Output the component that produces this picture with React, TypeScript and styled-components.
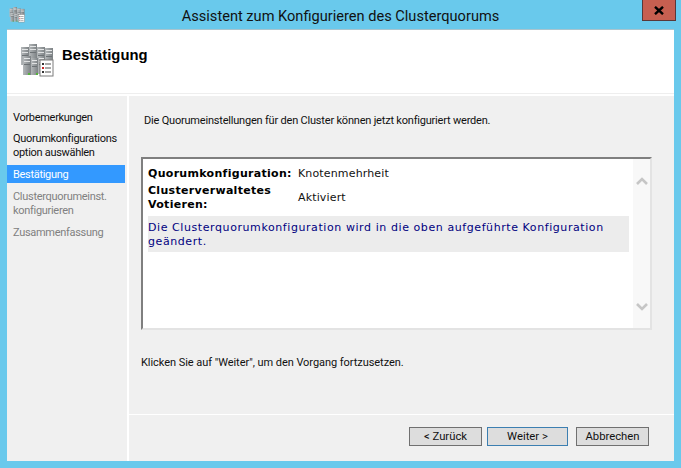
import React from "react";
import styled, { createGlobalStyle } from "styled-components";

const Global = createGlobalStyle`
  html, body { margin: 0; padding: 0; width: 681px; height: 468px; overflow: hidden; }
  * { box-sizing: border-box; }
`;

const uiFont = `Roboto, "Noto Sans", sans-serif`;
const monoFont = `"DejaVu Sans", sans-serif`;

const Window = styled.div`
  position: relative;
  width: 681px;
  height: 468px;
  background: #69c9ec;
  padding: 0 7px 7px;
  display: flex;
  flex-direction: column;
`;
const TitleBar = styled.div`
  height: 30px;
  flex: none;
  display: flex;
  align-items: center;
  padding: 0 0 0 2px;
  font: 14.6px/30px ${uiFont};
  color: #111;
`;
const TitleText = styled.div`
  flex: 1;
  text-align: center;
  padding: 1px 18px 0 0;
`;
const CloseButton = styled.div`
  position: absolute;
  left: 642px;
  top: 0;
  width: 34px;
  height: 21px;
  background: #c75f50;
  border: 1px solid #5a3838;
  border-top: 0;
  display: flex;
  align-items: center;
  justify-content: center;
`;
const Client = styled.div`
  flex: 1;
  min-height: 0;
  display: flex;
  flex-direction: column;
  background: #f0f0f0;
  box-shadow: 0 -1px 0 #a9c4ce;
`;
const Header = styled.div`
  height: 66px;
  flex: none;
  background: #fff;
  display: flex;
  align-items: flex-start;
  padding: 14px 0 0 13px;
  gap: 8px;
  position: relative;
  &::after {
    content: "";
    position: absolute;
    left: 0;
    right: 0;
    top: 63px;
    height: 1px;
    background: #eeeeee;
  }
`;
const HeaderTitle = styled.h1`
  margin: 2px 0 0;
  font: 700 14.8px/18px "Liberation Sans", Arial, sans-serif;
  color: #000;
`;
const Main = styled.div`
  flex: 1;
  min-height: 0;
  display: flex;
`;
const Nav = styled.nav`
  width: 120px;
  flex: none;
  padding-top: 15px;
  background: #f0f0f0;
  display: flex;
  flex-direction: column;
`;
const NavItem = styled.div<{ $state: "done" | "current" | "todo"; $gap: number }>`
  width: 118px;
  padding: ${(p) => (p.$state === "current" ? "3px 0 1px 6px" : "0 0 0 6px")};
  margin-bottom: ${(p) => p.$gap}px;
  font: 11px/14px ${uiFont};
  letter-spacing: -0.3px;
  color: ${(p) => (p.$state === "current" ? "#fff" : p.$state === "todo" ? "#808080" : "#111")};
  background: ${(p) => (p.$state === "current" ? "#3399ff" : "transparent")};
`;
const Right = styled.div`
  flex: 1;
  border-left: 2px solid #fff;
  display: flex;
  flex-direction: column;
  min-width: 0;
`;
const Content = styled.div`
  height: 319px;
  flex: none;
  padding: 17px 0 0 12px;
  border-bottom: 1px solid #fff;
`;
const Intro = styled.p`
  margin: 0 0 0 3px;
  font: 11px/16px ${uiFont};
  letter-spacing: -0.2px;
  color: #111;
`;
const SummaryBox = styled.div`
  margin-top: 28px;
  width: 511px;
  height: 173px;
  display: flex;
  background: #fff;
  border-style: solid;
  border-width: 2px;
  border-color: #7f7f7f #e3e3e3 #e3e3e3 #7f7f7f;
`;
const SummaryBody = styled.div`
  flex: 1;
  min-width: 0;
  padding: 8px 5px 0 5px;
  font: 11px/14px ${monoFont};
  letter-spacing: 0.15px;
  color: #111;
`;
const Row = styled.div<{ $tall?: boolean }>`
  display: flex;
  align-items: center;
  min-height: ${(p) => (p.$tall ? 28 : 14)}px;
  margin-bottom: 3px;
`;
const Label = styled.div`
  width: 150px;
  flex: none;
  font-weight: 700;
  letter-spacing: 0.3px;
  color: #000;
`;
const Notice = styled.div`
  margin-top: 4px;
  width: 481px;
  height: 36px;
  padding: 5px 0 0 0;
  background: #ececec;
  color: #000080;
  letter-spacing: 0.58px;
`;
const ScrollBar = styled.div`
  width: 17px;
  flex: none;
  background: #f8f8f8;
  display: flex;
  flex-direction: column;
  justify-content: space-between;
  align-items: center;
  padding: 18px 0 17px;
`;
const Hint = styled.p`
  margin: 25px 0 0;
  font: 11px/16px ${uiFont};
  letter-spacing: -0.05px;
  color: #111;
`;
const Footer = styled.div`
  flex: 1;
  display: flex;
  align-items: flex-start;
  padding: 12px 0 0 280px;
`;
const Button = styled.button<{ $w: number; $primary?: boolean; $ml: number }>`
  width: ${(p) => p.$w}px;
  height: 19px;
  margin-left: ${(p) => p.$ml}px;
  padding: 0;
  background: #dddddd;
  border: 1px solid ${(p) => (p.$primary ? "#3c7fb1" : "#707070")};
  font: 11.3px/16px ${uiFont};
  color: #111;
`;

const ServerGroup = ({ size }: { size: number }) => (
  <svg width={size} height={size} viewBox="0 0 34 34" style={{ flex: "none" }}>
    <defs>
      <linearGradient id="srv" x1="0" x2="1" y1="0" y2="0">
        <stop offset="0" stopColor="#b4b8ba" />
        <stop offset="1" stopColor="#7d8285" />
      </linearGradient>
    </defs>
    {[
      [1, 3, 8, 18],
      [9, 0, 8, 18],
      [17, 3, 8, 18],
      [25, 4, 8, 14],
      [3, 12, 8, 19],
      [11, 14, 7, 17],
      [18, 12, 7, 18],
    ].map(([x, y, w, h], i) => (
      <g key={i}>
        <rect x={x} y={y} width={w} height={h} fill="url(#srv)" />
        <rect x={x + 1} y={y + 2} width={w - 2} height={1} fill="#e4e6e7" />
        <rect x={x + 1} y={y + 5} width={w - 2} height={1} fill="#dfe1e2" />
        <rect x={x + 1} y={y + 8} width={w - 2} height={1} fill="#6d7275" />
      </g>
    ))}
    <rect x="8" y="29" width="2" height="2" fill="#56b33c" />
    <rect x="16" y="29" width="2" height="2" fill="#56b33c" />
    <rect x="20" y="16" width="13" height="16" fill="#fff" stroke="#7d7d7d" />
    <rect x="22" y="19" width="2" height="2" fill="#333" />
    <rect x="22" y="23" width="2" height="2" fill="#c82424" />
    <rect x="22" y="27" width="2" height="2" fill="#333" />
    <rect x="25" y="19.5" width="6" height="1" fill="#555" />
    <rect x="25" y="23.5" width="6" height="1" fill="#555" />
    <rect x="25" y="27.5" width="6" height="1" fill="#555" />
  </svg>
);

const Chevron = ({ up }: { up?: boolean }) => (
  <svg width="12" height="8" viewBox="0 0 12 8">
    <path d={up ? "M1 7 L6 2 L11 7" : "M1 1 L6 6 L11 1"} fill="none" stroke="#c6c6c6" strokeWidth="2.6" />
  </svg>
);

export default function App() {
  return (
    <Window>
      <Global />
      <TitleBar>
        <ServerGroup size={16} />
        <TitleText>Assistent zum Konfigurieren des Clusterquorums</TitleText>
      </TitleBar>
      <CloseButton>
        <svg width="10" height="9" viewBox="0 0 10 9">
          <path d="M1 0.8 L9 8.2 M9 0.8 L1 8.2" stroke="#000" strokeWidth="2.4" fill="none" />
        </svg>
      </CloseButton>
      <Client>
        <Header>
          <ServerGroup size={34} />
          <HeaderTitle>Bestätigung</HeaderTitle>
        </Header>
        <Main>
          <Nav>
            <NavItem $state="done" $gap={7}>Vorbemerkungen</NavItem>
            <NavItem $state="done" $gap={5}>Quorumkonfigurations<br />option auswählen</NavItem>
            <NavItem $state="current" $gap={7}>Bestätigung</NavItem>
            <NavItem $state="todo" $gap={8}>Clusterquorumeinst.<br />konfigurieren</NavItem>
            <NavItem $state="todo" $gap={0}>Zusammenfassung</NavItem>
          </Nav>
          <Right>
            <Content>
              <Intro>Die Quorumeinstellungen für den Cluster können jetzt konfiguriert werden.</Intro>
              <SummaryBox>
                <SummaryBody>
                  <Row>
                    <Label>Quorumkonfiguration:</Label>
                    <span>Knotenmehrheit</span>
                  </Row>
                  <Row $tall>
                    <Label>Clusterverwaltetes Votieren:</Label>
                    <span>Aktiviert</span>
                  </Row>
                  <Notice>Die Clusterquorumkonfiguration wird in die oben aufgeführte Konfiguration geändert.</Notice>
                </SummaryBody>
                <ScrollBar>
                  <Chevron up />
                  <Chevron />
                </ScrollBar>
              </SummaryBox>
              <Hint>Klicken Sie auf "Weiter", um den Vorgang fortzusetzen.</Hint>
            </Content>
            <Footer>
              <Button $w={73} $ml={0}>&lt; Zurück</Button>
              <Button $w={81} $ml={5} $primary>Weiter &gt;</Button>
              <Button $w={73} $ml={8}>Abbrechen</Button>
            </Footer>
          </Right>
        </Main>
      </Client>
    </Window>
  );
}
